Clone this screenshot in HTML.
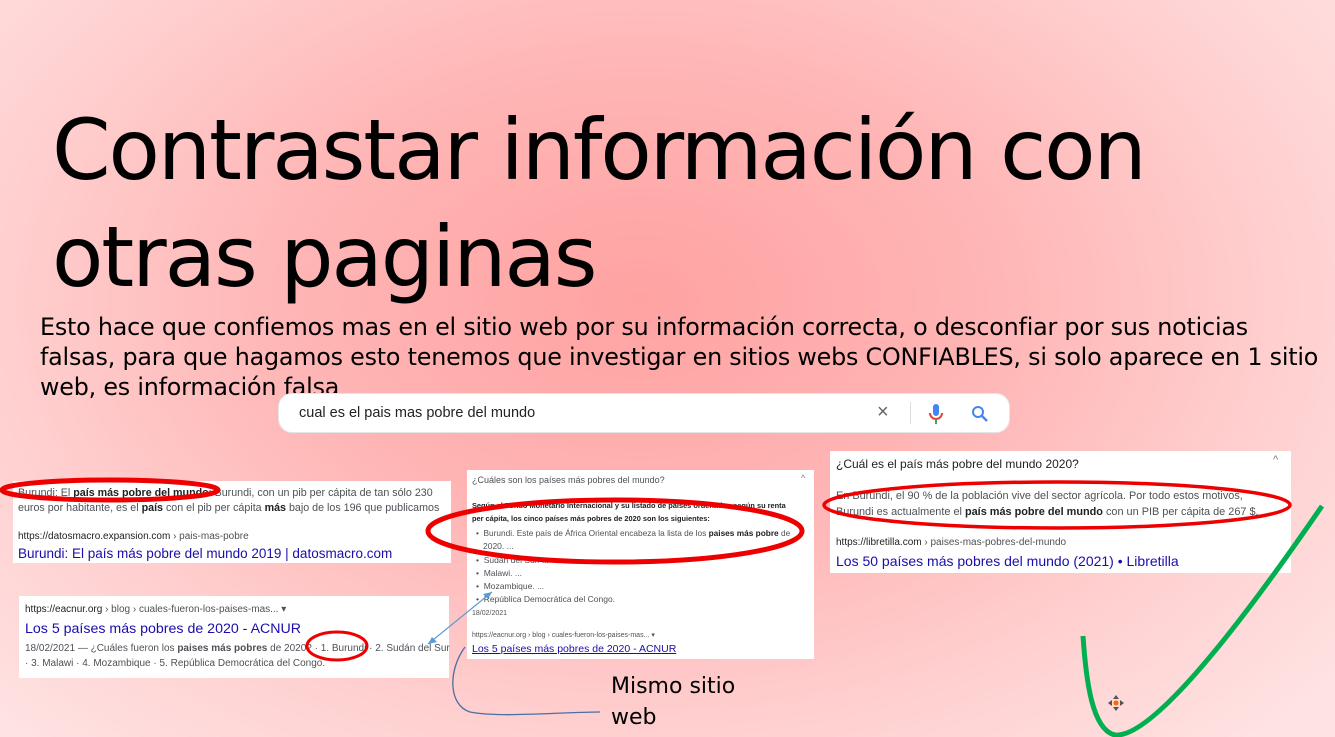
<!DOCTYPE html>
<html><head><meta charset="utf-8"><style>
*{margin:0;padding:0;box-sizing:border-box}
body{width:1335px;height:737px;overflow:hidden;position:relative;font-family:"Liberation Sans",Arial,sans-serif;
background:radial-gradient(ellipse 900px 600px at 640px 300px,#ffa2a2 0%,#ffb6b6 40%,#ffd2d2 75%,#ffe2e2 100%);}
.a{position:absolute;white-space:nowrap}
.title{font-family:"DejaVu Sans",sans-serif;font-size:84px;color:#000;left:52px;letter-spacing:-2.1px;line-height:1}
.body{font-family:"DejaVu Sans",sans-serif;font-size:23.8px;left:40px;line-height:30.5px;color:#000;letter-spacing:-0.2px}
.box{position:absolute;background:#fff}
.g{color:#4d5156}
.u{color:#202124}
.l{color:#1a0dab}
</style></head><body>
<div class="a title" style="top:108px">Contrastar información con</div>
<div class="a title" style="top:215px">otras paginas</div>
<div class="a body" style="top:312px">Esto hace que confiemos mas en el sitio web por su información correcta, o desconfiar por sus noticias</div>
<div class="a body" style="top:342px">falsas, para que hagamos esto tenemos que investigar en sitios webs CONFIABLES, si solo aparece en 1 sitio</div>
<div class="a body" style="top:372px">web, es información falsa</div>

<div class="box" style="left:278px;top:393px;width:732px;height:40px;border-radius:14px;border:1px solid #e5e5e5">
<div class="a" style="left:20px;top:11px;font-size:14.5px;color:#222">cual es el pais mas pobre del mundo</div>
<div class="a" style="left:598px;top:7px;font-size:20px;color:#666">×</div>
<div style="position:absolute;left:631px;top:8px;width:1px;height:22px;background:#ddd"></div>
<svg style="position:absolute;left:650px;top:10px" width="14" height="22" viewBox="0 0 14 22"><rect x="4" y="0" width="6" height="12" rx="3" fill="#4285f4"/><path d="M1 9a6 6 0 0 0 12 0" stroke="#ea4335" stroke-width="2" fill="none"/><path d="M7 15v5" stroke="#34a853" stroke-width="2"/></svg>
<svg style="position:absolute;left:692px;top:11px" width="18" height="18" viewBox="0 0 18 18"><circle cx="7" cy="7" r="5" stroke="#4285f4" stroke-width="2" fill="none"/><path d="M11 11l5 5" stroke="#4285f4" stroke-width="2.4"/></svg>
</div>

<div class="box" style="left:13px;top:481px;width:438px;height:82px">
<div class="a g" style="left:5px;top:6px;font-size:10.7px">Burundi: El <b class="u">país más pobre del mundo</b>: Burundi, con un pib per cápita de tan sólo 230</div>
<div class="a g" style="left:5px;top:21px;font-size:10.7px">euros por habitante, es el <b class="u">país</b> con el pib per cápita <b class="u">más</b> bajo de los 196 que publicamos</div>
<div class="a u" style="left:5px;top:50px;font-size:10px">https://datosmacro.expansion.com <span class="g">› pais-mas-pobre</span></div>
<div class="a l" style="left:5px;top:65px;font-size:13.5px">Burundi: El país más pobre del mundo 2019 | datosmacro.com</div>
</div>

<div class="box" style="left:19px;top:596px;width:430px;height:82px">
<div class="a u" style="left:6px;top:8px;font-size:10px">https://eacnur.org <span class="g">› blog › cuales-fueron-los-paises-mas... ▾</span></div>
<div class="a l" style="left:6px;top:25px;font-size:14.2px">Los 5 países más pobres de 2020 - ACNUR</div>
<div class="a g" style="left:6px;top:47px;font-size:10px">18/02/2021 — ¿Cuáles fueron los <b>paises más pobres</b> de 2020? · 1. Burundi · 2. Sudán del Sur</div>
<div class="a g" style="left:6px;top:62px;font-size:10px">· 3. Malawi · 4. Mozambique · 5. República Democrática del Congo.</div>
</div>

<div class="box" style="left:467px;top:470px;width:347px;height:189px">
<div class="a g" style="left:5px;top:5px;font-size:9px">¿Cuáles son los países más pobres del mundo?</div>
<div class="a" style="left:334px;top:3px;font-size:9px;color:#777">^</div>
<div class="a u" style="left:5px;top:31px;font-size:7.4px;font-weight:bold">Según el Fondo Monetario Internacional y su listado de países ordenados según su renta</div>
<div class="a u" style="left:5px;top:44px;font-size:7.4px;font-weight:bold">per cápita, los cinco países más pobres de 2020 son los siguientes:</div>
<div class="a g" style="left:9px;top:58px;font-size:8.3px">•&nbsp; Burundi. Este país de África Oriental encabeza la lista de los <b class="u">paises más pobre</b> de</div>
<div class="a g" style="left:16px;top:71px;font-size:8.5px">2020. ...</div>
<div class="a g" style="left:9px;top:85px;font-size:8.5px">•&nbsp; Sudán del Sur. ...</div>
<div class="a g" style="left:9px;top:98px;font-size:8.5px">•&nbsp; Malawi. ...</div>
<div class="a g" style="left:9px;top:111px;font-size:8.5px">•&nbsp; Mozambique. ...</div>
<div class="a g" style="left:9px;top:124px;font-size:8.5px">•&nbsp; República Democrática del Congo.</div>
<div class="a g" style="left:5px;top:140px;font-size:7px">18/02/2021</div>
<div class="a g" style="left:5px;top:161px;font-size:7px">https://eacnur.org › blog › cuales-fueron-los-paises-mas... ▾</div>
<div class="a l" style="left:5px;top:173px;font-size:10.5px;text-decoration:underline">Los 5 países más pobres de 2020 - ACNUR</div>
</div>

<div class="box" style="left:830px;top:451px;width:461px;height:122px">
<div class="a u" style="left:6px;top:6px;font-size:12px">¿Cuál es el país más pobre del mundo 2020?</div>
<div class="a" style="left:443px;top:3px;font-size:11px;color:#777">^</div>
<div class="a g" style="left:6px;top:39px;font-size:10.9px">En Burundi, el 90 % de la población vive del sector agrícola. Por todo estos motivos,</div>
<div class="a g" style="left:6px;top:55px;font-size:10.9px">Burundi es actualmente el <b class="u">país más pobre del mundo</b> con un PIB per cápita de 267 $.</div>
<div class="a u" style="left:6px;top:86px;font-size:10px">https://libretilla.com <span class="g">› paises-mas-pobres-del-mundo</span></div>
<div class="a l" style="left:6px;top:102px;font-size:14px">Los 50 países más pobres del mundo (2021) • Libretilla</div>
</div>

<div class="a" style="left:611px;top:671px;font-family:'DejaVu Sans',sans-serif;font-size:22px;line-height:31px;color:#000">Mismo sitio<br>web</div>

<svg style="position:absolute;left:0;top:0" width="1335" height="737">
<ellipse cx="110" cy="490" rx="108" ry="10" fill="none" stroke="#e00" stroke-width="5"/>
<ellipse cx="615" cy="531" rx="187" ry="31" fill="none" stroke="#e00" stroke-width="5"/>
<ellipse cx="1057" cy="505" rx="233" ry="23" fill="none" stroke="#e00" stroke-width="3.5"/>
<ellipse cx="337" cy="646" rx="30" ry="14" fill="none" stroke="#e00" stroke-width="3"/>
<path d="M492 592 L428 644" stroke="#5b9bd5" stroke-width="1.2" fill="none"/>
<path d="M492 592 l-9 2 l5 5z M428 644 l9-2 l-5-5z" fill="#5b9bd5"/>
<path d="M465 647 C448 670 448 705 470 712 C500 718 560 712 600 712" stroke="#4a6fa5" stroke-width="1.3" fill="none"/>
<path d="M1083 636 C1086 680 1092 730 1115 735 C1150 738 1230 640 1322 506" stroke="#00b050" stroke-width="5" fill="none"/>
<g transform="translate(1116,703)"><circle r="2.5" fill="#f60"/><path d="M0-8l-3 4h6zM0 8l-3-4h6zM-8 0l4-3v6zM8 0l-4-3v6z" fill="#555"/></g>
</svg>
</body></html>
